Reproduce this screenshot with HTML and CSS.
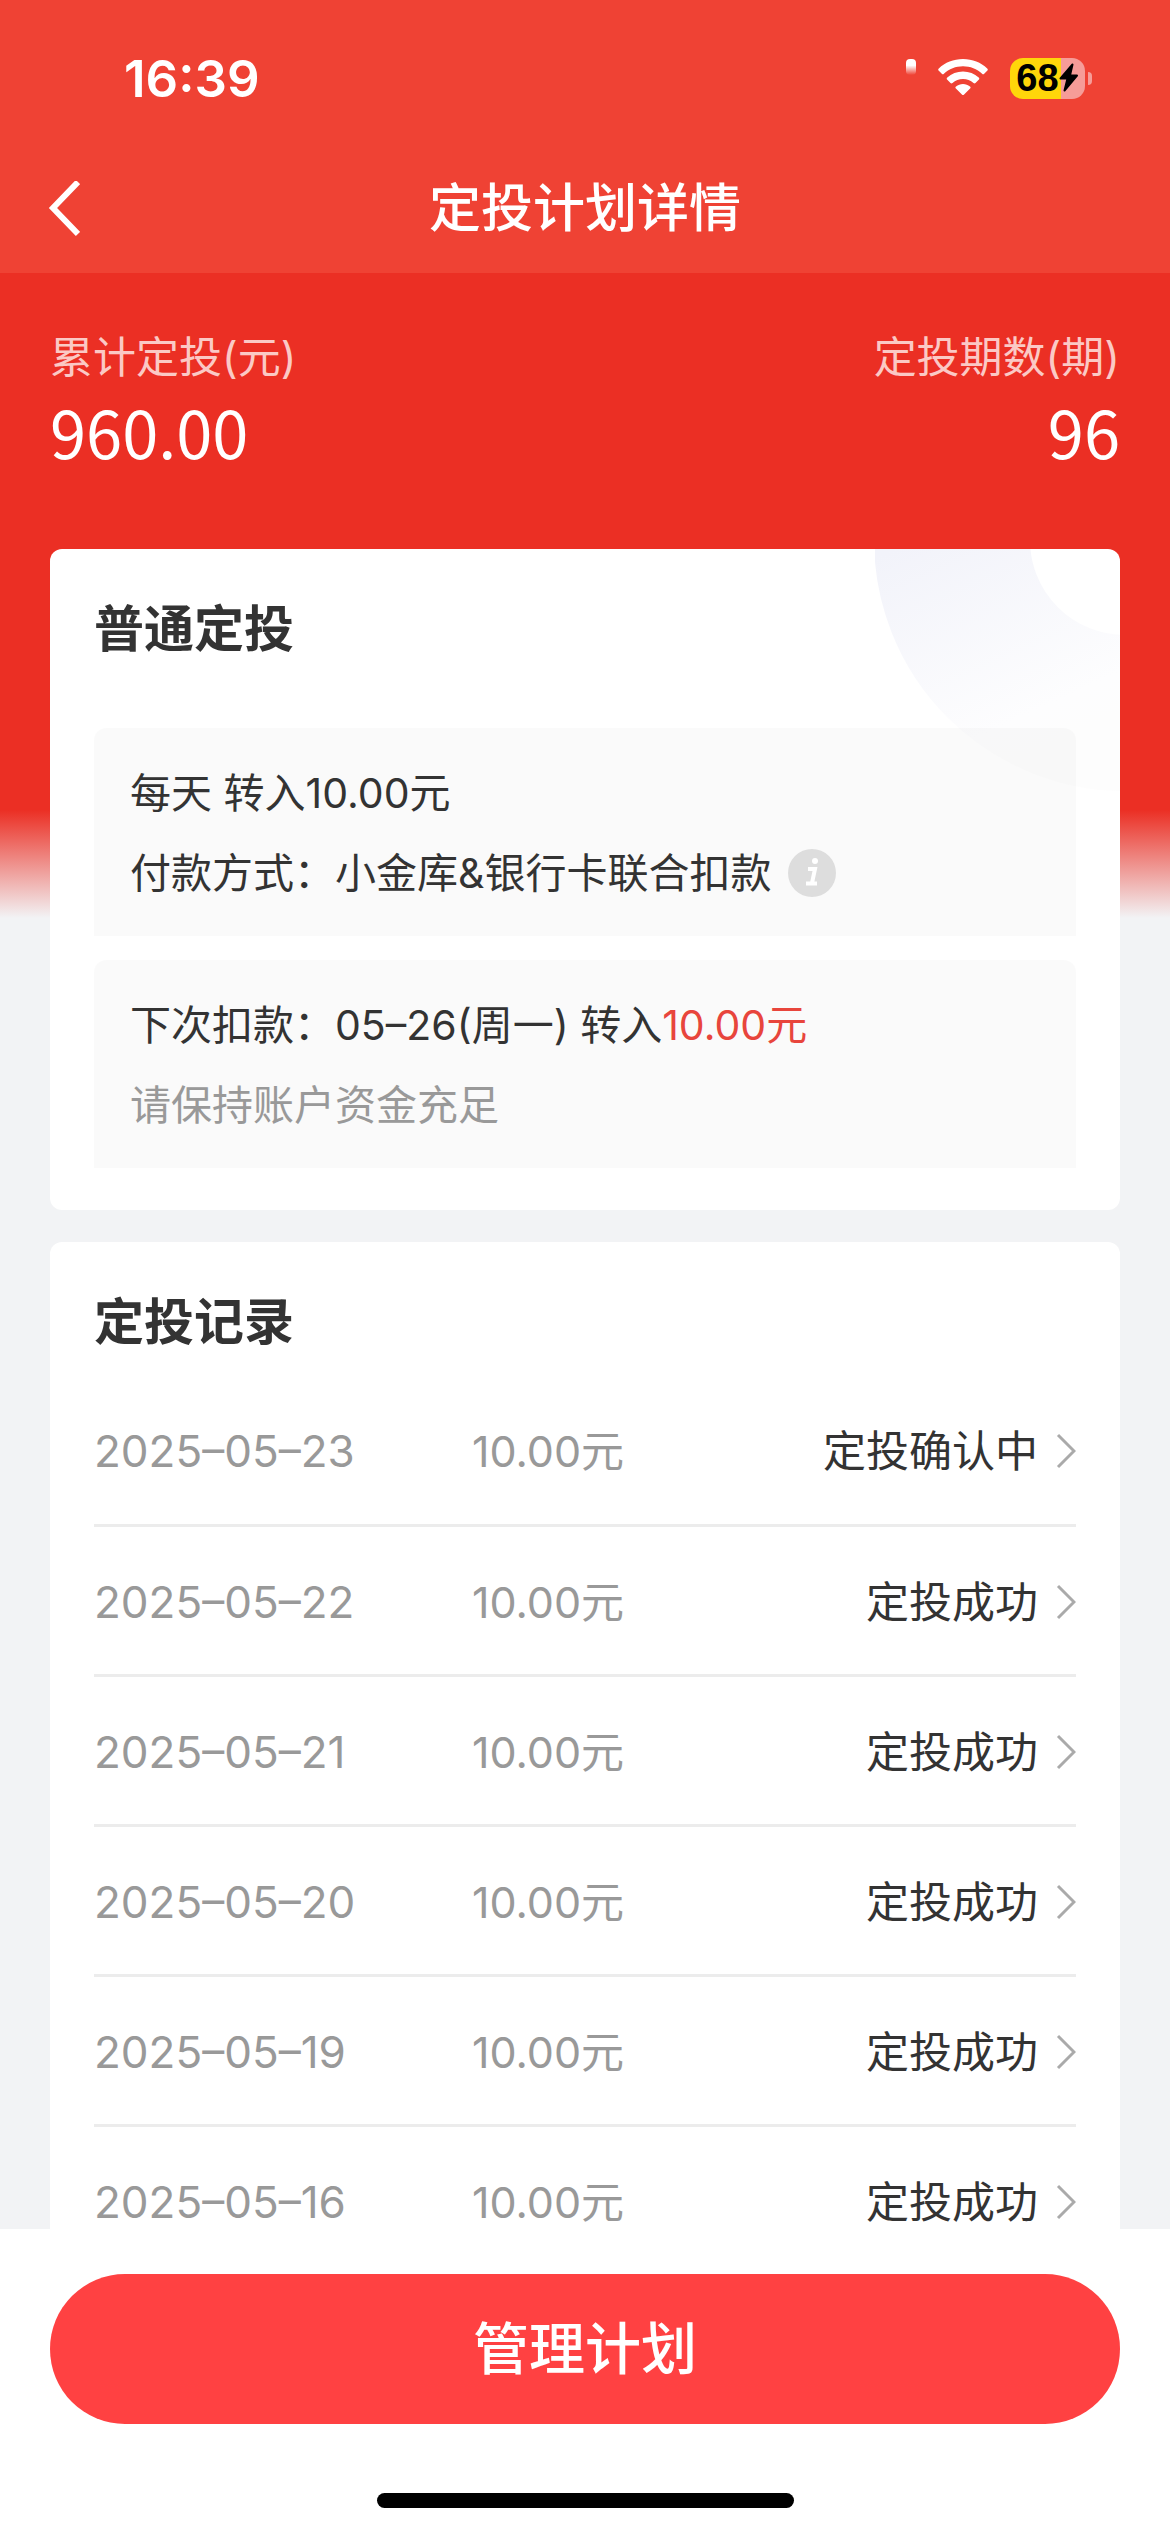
FILE: index.html
```html
<!DOCTYPE html>
<html lang="zh-CN">
<head>
    <meta charset="UTF-8">
    <meta name="viewport" content="width=device-width, initial-scale=1.0">
    <title>定投计划详情</title>
    <link rel="stylesheet" href="styles.css">
</head>
<body>
<header class="header">
    <div class="status-bar">
        <span class="time">16:39</span>
        <div class="status-icons">
            <svg class="signal" width="56" height="42" viewBox="0 0 56 42">
                <defs>
                    <linearGradient id="signalFade" x1="0" y1="0" x2="0" y2="1">
                        <stop offset="0.4" stop-color="#fff"/>
                        <stop offset="1" stop-color="#fff" stop-opacity="0"/>
                    </linearGradient>
                </defs>
                <rect x="46" y="2" width="10" height="16" rx="4" fill="url(#signalFade)"/>
            </svg>
            <svg width="50" height="42" viewBox="0 0 50 42" fill="#fff">
                <path d="M25 2C15.500 2 7 5.500.800 11.500c-.800.800-.800 1.500 0 2.300l3 3c.700.700 1.400.700 2.100 0C11 12 17.700 9.300 25 9.300s14 2.700 19.100 7.500c.700.700 1.400.700 2.100 0l3-3c.800-.800.800-1.500 0-2.300C43 5.500 34.500 2 25 2z"/>
                <path d="M25 14.500c-6 0-11.500 2.300-15.700 6-.800.800-.800 1.500 0 2.200l3.200 3.200c.700.700 1.300.600 2 0 2.900-2.500 6.500-4 10.500-4s7.600 1.500 10.500 4c.700.600 1.300.700 2 0l3.200-3.200c.800-.700.800-1.400 0-2.200-4.200-3.700-9.700-6-15.700-6z"/>
                <path d="M25 27c-2.700 0-5 .900-7 2.400-.800.700-.800 1.300-.100 2l6 6c.800.800 1.400.800 2.200 0l6-6c.700-.700.700-1.300-.100-2-2-1.500-4.300-2.400-7-2.400z"/>
            </svg>
            <div class="battery">
                <span class="battery-level">68</span>
                <svg width="20" height="30" viewBox="0 0 20 30">
                    <path d="M13.500 1.500L1.500 15.500h7L5.500 27.500 18 12.500h-7z" fill="#000" stroke="#000" stroke-width="2" stroke-linejoin="round"/>
                </svg>
            </div>
        </div>
    </div>
    <div class="nav-bar">
        <button class="back" aria-label="返回">
            <svg width="32" height="56" viewBox="0 0 32 56">
                <path d="M30 1L5 27l25 26" fill="none" stroke="#fff" stroke-width="6"/>
            </svg>
        </button>
        <h1>定投计划详情</h1>
    </div>
</header>

<main class="content">
    <div class="summary">
        <div>
            <p class="summary-label">累计定投(元)</p>
            <p class="summary-value">960.00</p>
        </div>
        <div class="summary-right">
            <p class="summary-label">定投期数(期)</p>
            <p class="summary-value">96</p>
        </div>
    </div>

    <!-- Plan -->
    <section class="card plan">
        <svg class="ring" width="245" height="245" viewBox="0 0 245 245">
            <defs>
                <linearGradient id="ringFade" x1="20" y1="0" x2="120" y2="220" gradientUnits="userSpaceOnUse">
                    <stop offset="0" stop-color="#f2f3fa"/>
                    <stop offset="0.850" stop-color="#fdfdfe"/>
                    <stop offset="1" stop-color="#fdfdfd"/>
                </linearGradient>
            </defs>
            <circle cx="250" cy="-9" r="173" fill="none" stroke="url(#ringFade)" stroke-width="156"/>
        </svg>
        <h2>普通定投</h2>
        <div class="plan-box">
            <p>每天 转入10.00元</p>
            <p class="pay-method">付款方式：小金库&amp;银行卡联合扣款
                <button class="info" aria-label="说明">
                    <svg width="48" height="48" viewBox="0 0 48 48">
                        <circle cx="24" cy="24" r="24" fill="#ddd"/>
                        <circle cx="27" cy="12" r="3" fill="#fff"/>
                        <path d="M20 20h7l-3 14M18 34.500h11" fill="none" stroke="#fff" stroke-width="4"/>
                    </svg>
                </button>
            </p>
        </div>
        <div class="plan-box">
            <p>下次扣款：05–26(周一) 转入<span class="amount">10.00元</span></p>
            <p class="hint">请保持账户资金充足</p>
        </div>
    </section>

    <!-- Records -->
    <section class="card">
        <h2>定投记录</h2>
        <table class="records">
            <tr>
                <td class="date">2025–05–23</td>
                <td class="money">10.00元</td>
                <td><a href="#">定投确认中<svg width="20" height="36" viewBox="0 0 20 36"><path d="M2 2l16 16L2 34"/></svg></a></td>
            </tr>
            <tr>
                <td class="date">2025–05–22</td>
                <td class="money">10.00元</td>
                <td><a href="#">定投成功<svg width="20" height="36" viewBox="0 0 20 36"><path d="M2 2l16 16L2 34"/></svg></a></td>
            </tr>
            <tr>
                <td class="date">2025–05–21</td>
                <td class="money">10.00元</td>
                <td><a href="#">定投成功<svg width="20" height="36" viewBox="0 0 20 36"><path d="M2 2l16 16L2 34"/></svg></a></td>
            </tr>
            <tr>
                <td class="date">2025–05–20</td>
                <td class="money">10.00元</td>
                <td><a href="#">定投成功<svg width="20" height="36" viewBox="0 0 20 36"><path d="M2 2l16 16L2 34"/></svg></a></td>
            </tr>
            <tr>
                <td class="date">2025–05–19</td>
                <td class="money">10.00元</td>
                <td><a href="#">定投成功<svg width="20" height="36" viewBox="0 0 20 36"><path d="M2 2l16 16L2 34"/></svg></a></td>
            </tr>
            <tr>
                <td class="date">2025–05–16</td>
                <td class="money">10.00元</td>
                <td><a href="#">定投成功<svg width="20" height="36" viewBox="0 0 20 36"><path d="M2 2l16 16L2 34"/></svg></a></td>
            </tr>
        </table>
    </section>
</main>

<footer class="footer">
    <button class="manage">管理计划</button>
    <div class="home-indicator"></div>
</footer>
</body>
</html>
```
FILE: styles.css
```css
* {
    box-sizing: border-box;
}
body {
    margin: 0;
    height: 100vh;
    display: flex;
    flex-direction: column;
    font-family: Inter, "Noto Sans CJK SC", sans-serif;
    color: #333;
    background-color: #f2f3f5;
}
h1, h2, p {
    margin: 0;
}
button {
    padding: 0;
    border: none;
    background: none;
    font-family: inherit;
    cursor: pointer;
}
svg {
    display: block;
    flex: none;
}

/* Header */
.header {
    flex: none;
    background-color: #ef4234;
    color: #fff;
}
.status-bar {
    display: flex;
    justify-content: space-between;
    align-items: center;
    height: 140px;
    padding: 16px 78px 0 124px;
}
.time {
    font-size: 51px;
    font-weight: 600;
}
.status-icons {
    display: flex;
    align-items: center;
    gap: 22px;
}
.battery {
    position: relative;
    display: flex;
    align-items: center;
    justify-content: center;
    width: 75px;
    height: 41px;
    margin-right: 7px;
    border-radius: 13px;
    background: linear-gradient(to right, #ffd60a 68%, #f69c98 68%);
}
.battery::after {
    content: "";
    position: absolute;
    right: -7px;
    width: 4px;
    height: 13px;
    border-radius: 0 6px 6px 0;
    background-color: #f69c98;
}
.battery-level {
    color: #000;
    font-family: "Liberation Sans", sans-serif;
    font-size: 38px;
    font-weight: 700;
    line-height: 41px;
}
.nav-bar {
    display: grid;
    grid-template-columns: 1fr auto 1fr;
    align-items: center;
    height: 133px;
    padding: 4px 48px 0;
}
.nav-bar h1 {
    font-size: 52px;
    font-weight: 500;
    line-height: 70px;
}

/* Content */
.content {
    flex: 1;
    min-height: 0;
    overflow-y: auto;
    scrollbar-width: none;
    padding: 0 50px;
    background: linear-gradient(#eb2f24 537px, #f2f3f5 645px);
}
.summary {
    display: flex;
    justify-content: space-between;
    padding: 54px 0 72px;
    color: #fff;
}
.summary-right {
    text-align: right;
}
.summary-label {
    font-size: 43px;
    line-height: 60px;
    color: #fbc9c5;
}
.summary-value {
    font-family: "Noto Sans CJK SC", sans-serif;
    font-size: 65px;
    line-height: 88px;
    margin-bottom: 2px;
}
.card {
    position: relative;
    margin-bottom: 32px;
    padding: 44px 44px 42px;
    border-radius: 12px;
    background-color: #fff;
    overflow: hidden;
}
.card h2 {
    font-size: 50px;
    font-weight: 700;
    line-height: 72px;
}
.ring {
    position: absolute;
    top: 0;
    right: 0;
}
.plan h2 {
    margin-bottom: 63px;
}
.plan-box {
    position: relative;
    padding: 25px 36px 23px;
    border-radius: 12px 12px 0 0;
    background-color: rgba(0, 0, 0, 0.02);
    font-size: 41px;
    line-height: 80px;
}
.plan-box + .plan-box {
    margin-top: 24px;
}
.pay-method {
    display: flex;
    align-items: center;
    gap: 17px;
}
.amount {
    color: #e8453c;
}
.hint {
    color: #999;
}
.records {
    width: 100%;
    margin-top: 17px;
    border-collapse: collapse;
    table-layout: fixed;
    font-size: 43px;
    line-height: 64px;
}
.records td {
    height: 150px;
    padding: 4px 0 0;
    border-bottom: 3px solid #ececec;
}
.records .date, .records .money {
    color: #999;
}
.date {
    width: 378px;
    font-size: 44px;
}
.money {
    width: 25%;
}
.records a {
    display: flex;
    justify-content: flex-end;
    align-items: center;
    gap: 18px;
    color: #333;
    text-decoration: none;
}
.records path {
    fill: none;
    stroke: #aaa;
    stroke-width: 3;
}

/* Footer */
.footer {
    flex: none;
    padding: 45px 50px 24px;
    background-color: #fff;
}
.manage {
    display: block;
    width: 100%;
    height: 150px;
    border-radius: 75px;
    background-color: #ff4142;
    color: #fff;
    font-size: 56px;
    font-weight: 500;
    line-height: 150px;
}
.home-indicator {
    width: 417px;
    height: 15px;
    margin: 69px auto 0;
    border-radius: 8px;
    background-color: #000;
}
```
